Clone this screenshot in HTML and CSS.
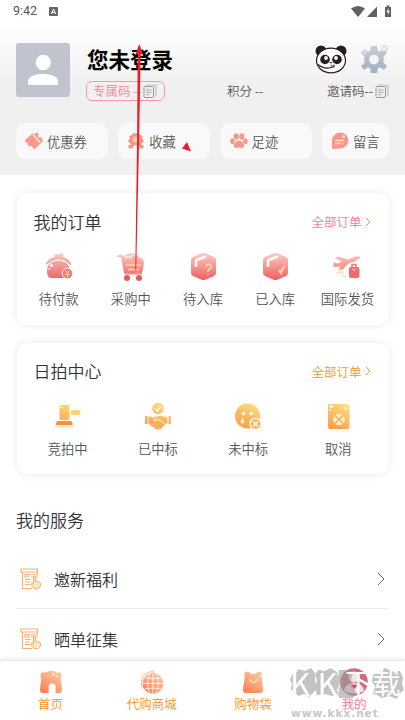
FILE: index.html
```html
<!DOCTYPE html>
<html lang="zh-CN">
<head>
<meta charset="utf-8">
<meta name="viewport" content="width=device-width, initial-scale=1">
<title>我的</title>
<link rel="stylesheet" href="styles.css">
</head>
<body>
<svg class="defs" width="0" height="0" aria-hidden="true">
  <defs>
    <linearGradient id="red" x1="0" y1="0" x2="0" y2="28" gradientUnits="userSpaceOnUse"><stop offset=".05" stop-color="#fdc5bb"/><stop offset="1" stop-color="#ee5a5f"/></linearGradient>
    <linearGradient id="gold" x1="20" y1="0" x2="8" y2="28" gradientUnits="userSpaceOnUse"><stop offset="0" stop-color="#ffdc82"/><stop offset="1" stop-color="#fd9742"/></linearGradient>
    <linearGradient id="peach" x1="22" y1="0" x2="4" y2="26" gradientUnits="userSpaceOnUse"><stop offset="0" stop-color="#fed0a6"/><stop offset="1" stop-color="#fb7a50"/></linearGradient>
    <linearGradient id="steel" x1="0" y1="0" x2="0" y2="30" gradientUnits="userSpaceOnUse"><stop offset="0" stop-color="#cbd0d8"/><stop offset="1" stop-color="#9dadc2"/></linearGradient>
    <symbol id="copy" viewBox="0 0 14 14"><path d="M4 2.500V1h9v10h-1.500" fill="none" stroke="#c4c4c4" stroke-width="1.200"/><rect x="1" y="2.500" width="9.500" height="11" rx="1" fill="none" stroke="#999"/><path d="M3 6h5.500M3 8.300h5.500M3 10.600h3" stroke="#aaa" fill="none"/></symbol>
    <symbol id="service" viewBox="0 0 22 22"><path d="M2.500 4v16.500H12M17 4v5M1 1h16.500v3H1zM5 6.500h4v2.500H5zM11 6.500h4M11 9h2M5 11.500h6M5 14h5M5 16.500h5" fill="none" stroke="#f9b079" stroke-width="1.200"/><path d="M13.500 9c0-1.500 2-1.500 2 0v4.500l4 .7c1.200.4 1.300 1.400 1 3-.3 2-1.400 3.600-3 3.600h-2.300c-1.300 0-4.200-3.500-4.200-4.500s1.300-1 2.500.2z" fill="#fdebc4" stroke="#f9a565"/></symbol>
  </defs>
</svg>
<main class="screen">
  <header class="profile">
    <div class="status">
      <span class="clock">9:42</span>
      <svg class="app-badge" viewBox="0 0 9 9"><rect width="9" height="9" rx="1" fill="#666"/><path d="M2.300 7 4.500 2l2.200 5M3 5.500h3" fill="none" stroke="#fff"/></svg>
      <svg class="signals" viewBox="0 0 41 13"><path d="M0 3.500Q7 -1.500 14 3.500L7 12z M26 1.500V12H16z M34 2h1.500V.500h3V2H40v10h-6z" fill="#616161"/><path d="m37.500 3-2 4h1.300v3l2-4h-1.300z" fill="#fff"/></svg>
    </div>
    <div class="identity">
      <svg class="avatar" viewBox="0 0 54 54"><rect width="54" height="54" rx="3" fill="#bfc4ce"/><circle cx="27.300" cy="19.500" r="7.700" fill="#fff"/><path d="M12 42v-4c0-4.500 7-7 15-7s15 2.500 15 7v4z" fill="#fff"/></svg>
      <div class="details">
        <div class="name-line">
          <h1>您未登录</h1>
          <svg class="panda" viewBox="0 0 32 29"><g fill="#291c20"><circle cx="6" cy="6" r="5.500"/><circle cx="26" cy="6" r="5.500"/></g><ellipse cx="16" cy="15.500" rx="14.500" ry="12.300" fill="#fff" stroke="#291c20" stroke-width="1.200"/><g fill="#291c20"><ellipse cx="10" cy="14.500" rx="4.800" ry="4.700"/><ellipse cx="22" cy="14.500" rx="4.800" ry="4.700"/></g><circle cx="11" cy="13" r="1.900" fill="#fff"/><circle cx="21" cy="13" r="1.900" fill="#fff"/><path d="M14.500 17h3l-1.500 1.700z" fill="#291c20"/><path d="M3 19.500c4 4 10 4 13 3l3-.8v-2" fill="none" stroke="#291c20" stroke-width="1.200"/><circle cx="16.500" cy="20.500" r="1" fill="#e23b3b"/></svg>
          <svg class="gear" viewBox="0 0 28 30"><path d="M22 1h3l.5 2 2 1-1 2-1 2-3 1-3-3z" fill="#e1dcd6"/><g fill="url(#steel)"><circle cx="13" cy="15.500" r="9.800"/><path d="M10 2h6l1 6H9zM10 29h6l1-6H9zM0 9l3-4 6 4-4 5zM26 22l-3 4-6-4 4-5zM0 22l3 4 6-4-4-5zM26 9l-3-4-6 4 4 5z"/></g><circle cx="13" cy="15.500" r="4.800" fill="#f5f5f5"/><circle cx="3.500" cy="8.500" r="2.300" fill="#d5dbe2"/><circle cx="23" cy="5" r="2.200" fill="#f3eee9"/></svg>
        </div>
        <div class="code-line">
          <span class="own-code">专属码 --<svg><use href="#copy"/></svg></span>
          <span class="points">积分 --</span>
          <span class="invite">邀请码--<svg><use href="#copy"/></svg></span>
        </div>
      </div>
    </div>
    <nav class="shortcuts">
      <a><svg viewBox="0 0 18 18"><path d="M0 8 8 1c1 2 3 1 3-.8L14 2l-1 2 2 2 1.500-1L18 9l-8 8-2.500-1c.8-1.500-1-3-2.500-1.500L2.500 13c1-2 0-3-2.500-2.500z" fill="#fc998f"/><path d="m8 2.500 7 8" stroke="#fff3ea" stroke-width="1.300"/></svg>优惠券</a>
      <a><svg viewBox="0 0 18 18"><path d="m9 1.500 2.500-.5L13 3l2.500 1L15.300 7 17 9l-2 2-1 2h3l-1 2 1 1-4 .5L11 13H7l-2 3.500L1 16l1-1-1-2h3l-1-2-2-2 1.700-2-.2-3L5 3l1.500-2z" fill="#fb8f84"/><circle cx="9" cy="7.500" r="4" fill="#fbb09c"/><path d="m9 4.500 1 2 2 .2-1.500 1.500.5 2L9 9.200l-2 1 .5-2L6 6.700l2-.2z" fill="#ffe0b5"/></svg>收藏</a>
      <a><svg viewBox="0 0 18 18"><g fill="#fc968d"><ellipse cx="6.200" cy="4.500" rx="2.600" ry="3.300"/><ellipse cx="11.800" cy="4.500" rx="2.600" ry="3.300"/><ellipse cx="2.500" cy="9.200" rx="2.200" ry="3"/><ellipse cx="15.500" cy="9.200" rx="2.200" ry="3"/><path d="M9 8.500c3 0 5.500 3.500 5.200 5.500-.3 2.500-3 2-5.200 1.500-2.200.5-4.900 1-5.200-1.500C3.500 12 6 8.500 9 8.500z"/></g></svg>足迹</a>
      <a><svg viewBox="0 0 18 18"><path d="M1 17V8.500A8.200 8 0 1 1 9.500 16.500z" fill="#fc968d"/><path d="M4 8.500h9M4 11.500h6M12 11.500h1" stroke="#ffe4c1" stroke-width="1.500"/><circle cx="12.500" cy="4.500" r="1.300" fill="#fff"/></svg>留言</a>
    </nav>
  </header>

  <section class="card orders">
    <div class="card-head"><h2>我的订单</h2><a>全部订单<svg viewBox="0 0 6 10"><path d="m1 1 4 4-4 4"/></svg></a></div>
    <ul>
      <li><svg viewBox="0 0 28 28"><path d="M1 10C4 6 7 4 10 4c-2-3 2-4 3.500-2C15-1 20 1 18 4c3 0 6 3 8 6v3c-5-5-8-6.500-12.500-6.500S5 9 1 12z" fill="url(#red)"/><path d="M6 9.500c4-3 11-3 15 0 2 1.500 3.500 4 3.500 8 0 5-2.500 7.500-5.500 7.500H6c-3 0-4-4-4-7s1-6.500 4-8.500z" fill="url(#red)"/><path d="M1.500 12.500Q13 1.500 25.500 12.500" fill="none" stroke="#fff"/><circle cx="22.500" cy="20.500" r="5.300" fill="#f17b78" stroke="#fff"/><path d="m20.500 17.500 2 2.500 2-2.500M22.500 20v4M20.300 21.500h4.400" fill="none" stroke="#ffe1a8"/><g fill="#fff"><circle cx="6.500" cy="12.500" r="1.500"/><circle cx="4.300" cy="16" r=".9"/></g></svg>待付款</li>
      <li><svg viewBox="0 0 28 28"><path d="m0 4 1-2h5l1 3c0-2 2-4 4-4l6-1 6 5 3 1 1 4-2 10.500H7L4 4z" fill="url(#red)"/><path d="M9 6V3.500h3l2 1.500M13 6l2-3.500 3-.5" fill="none" stroke="#fff"/><path d="M9 12h15M11 16.500h11" stroke="#ffdda6" stroke-width="1.600"/><path d="M8 21h17" stroke="#ee7474"/><circle cx="10" cy="25" r="3" fill="#e8575b"/><circle cx="22" cy="25" r="3" fill="#e8575b"/></svg>采购中</li>
      <li><svg viewBox="0 0 28 28"><path d="M12 .5c2-.7 3-.7 5 0L25 4q2 1 2 3v13q0 2-2 3l-8 3.500q-2.500 1-5 0L4 23q-2-1-2-3V7q0-2 2-3z" fill="url(#red)"/><path d="M7 14V8.500q0-1.500 2-2l8-3" fill="none" stroke="#fff" stroke-width="2.500"/><path d="M17 14c0-4 6-3 5 .5C21.500 16 19 16 19 19M18.500 21.500h1" fill="none" stroke="#ffdda6" stroke-width="1.700"/></svg>待入库</li>
      <li><svg viewBox="0 0 28 28"><path d="M12 .5c2-.7 3-.7 5 0L25 4q2 1 2 3v13q0 2-2 3l-8 3.500q-2.500 1-5 0L4 23q-2-1-2-3V7q0-2 2-3z" fill="url(#red)"/><path d="M7 14V8.500q0-1.500 2-2l8-3" fill="none" stroke="#fff" stroke-width="2.500"/><path d="m18 17 2 3q1-4 3.500-6.500" fill="none" stroke="#ffdda6" stroke-width="2"/></svg>已入库</li>
      <li><svg viewBox="0 0 28 28"><path d="M1 14c-1-1-.5-3 0-5l3 1.500 5-2L2 5l3-1.500 10 3 6-2.500c3-1 5.500-1 6 0s-2 3-5 4.200L15 11l-6 6-4 .5 3-4z" fill="url(#red)"/><path d="M5 17h5M3 20h8M8 23h5" stroke="#ffe2b8" stroke-width="1.600"/><path d="M19 14v-2.500h4V14" fill="none" stroke="#ee7775" stroke-width="1.500"/><rect x="16" y="14" width="10.500" height="11" rx="2" fill="#ec6c6b"/><path d="M19.500 16q1.500 2.500 3 0" fill="none" stroke="#fff"/></svg>国际发货</li>
    </ul>
  </section>

  <section class="card auctions">
    <div class="card-head"><h2>日拍中心</h2><a>全部订单<svg viewBox="0 0 6 10"><path d="m1 1 4 4-4 4"/></svg></a></div>
    <ul>
      <li><svg viewBox="0 0 28 28"><rect x="1" y="22" width="18" height="3" rx="1" fill="#ffedcc"/><rect x="5.500" y="2" width="10" height="15" rx="1.500" fill="url(#gold)"/><path d="M2 22v-1.500Q2 18 4 18h12.500q2 0 2 2.500V22z" fill="#fb8f3d"/><rect x="16.500" y="7" width="10" height="5" rx="2.500" fill="#ffd07a"/><circle cx="7.500" cy="4.500" r="1" fill="#fff"/></svg>竞拍中</li>
      <li><svg viewBox="0 0 28 28"><circle cx="14" cy="5.500" r="5.800" fill="url(#gold)"/><path d="m11 5.500 2.300 2.300L17 3.500" fill="none" stroke="#fff" stroke-width="1.500"/><path d="M1 13h3l5 1.500 4-1.500h5l5 1.500 1-1.500h3v8h-3l-1-1-7 6.500h-4L4 20v1H1z" fill="url(#gold)"/><path d="m14 13-4.500 4c1.500 1.500 3.500.5 5-1l6 5M4 13v8M24 13v8" fill="none" stroke="#fff" stroke-width=".9"/><path d="M8 22.500l2.500-2M10.500 24.500l2.500-2M13.500 26l2-2" fill="none" stroke="#fff" stroke-width=".7"/></svg>已中标</li>
      <li><svg viewBox="0 0 28 28"><circle cx="13.500" cy="13" r="12.500" fill="url(#gold)"/><circle cx="9.500" cy="10.500" r="1.700" fill="#fff"/><circle cx="17.500" cy="10.500" r="1.700" fill="#fff"/><path d="M8.500 14.500c2 2.500 3 6 0 6s-2-3.500 0-6z" fill="#fff2cc"/><circle cx="21.500" cy="21" r="5.600" fill="#fdb15c" stroke="#fff" stroke-width="1.300"/><path d="m19 18.500 5 5M24 18.500l-5 5" stroke="#fff4d4" stroke-width="1.800"/></svg>未中标</li>
      <li><svg viewBox="0 0 28 28"><path d="M4 1h18q3.500 0 3.500 4v19q0 2-2 2H6q-2 0-2-2z" fill="url(#gold)"/><circle cx="15" cy="16.500" r="5.800" fill="#fff1cb"/><path d="m11 12.500 8 8M19 12.500l-8 8" stroke="#fdb159" stroke-width="1.700"/><path d="M19 3.500q5 0 5 3h-4z" fill="#fff0bb"/><circle cx="7.500" cy="3.500" r="1.600" fill="#fff"/><circle cx="6" cy="7" r="1" fill="#fff"/></svg>取消</li>
    </ul>
  </section>

  <section class="services">
    <h2>我的服务</h2>
    <a class="service"><svg class="service-icon"><use href="#service"/></svg><span>邀新福利</span><svg class="arrow" viewBox="0 0 8 14"><path d="m1 1 6 6-6 6"/></svg></a>
    <a class="service"><svg class="service-icon"><use href="#service"/></svg><span>晒单征集</span><svg class="arrow" viewBox="0 0 8 14"><path d="m1 1 6 6-6 6"/></svg></a>
  </section>

  <nav class="tabs">
    <a><svg viewBox="0 0 26 26"><path d="M2.500 9C0 5 3 1 7 3c4-3 9-3 13 0 4-2 6 2 3.500 6L25 21q0 4-4 4h-3v-7q0-3-3.500-3.500h-1Q10.500 15 10.500 18v7H5q-4 0-4-4z" fill="url(#peach)"/><circle cx="15.500" cy="5" r="1.200" fill="#fff"/><circle cx="19" cy="6.500" r=".8" fill="#fff"/></svg>首页</a>
    <a><svg viewBox="0 0 26 26"><circle cx="14" cy="14.500" r="11.300" fill="url(#peach)"/><path d="M3 14.500h22M5 8.500q9 2 18 0M5 20.500q9-2 18 0M14 3v23M11 3Q5 14 11 26M17 3q6 11 0 23" fill="none" stroke="#fff" stroke-width=".9"/><path d="M2.500 20Q-1 9 6 4q3-2 6-2l2-1.500 1 2.500-3 1" fill="none" stroke="#fbb27e"/></svg>代购商城</a>
    <a><svg viewBox="0 0 26 26"><path d="M4 8c-1-4 0-6 3-6q3 0 4 2h5q1-2 4-2c3 0 3 3 2.500 6L24 21q0 4-4 4H6q-4 0-4-4z" fill="url(#peach)"/><path d="M9 10q5 7 9 0" fill="none" stroke="#ffe4b7" stroke-width="1.700"/><circle cx="21" cy="7" r="1" fill="#fff"/></svg>购物袋</a>
    <a class="current"><svg viewBox="0 0 28 28"><circle cx="14" cy="14" r="13.800" fill="#d06c7c"/><circle cx="14" cy="9" r="5.500" fill="#f3e3e3"/><path d="M4 23q1-8 10-8t10 8q-10 5-20 0z" fill="#f3e3e3"/><path d="m14 21-3-3q1-3 3-1 2-2 3 1z" fill="#d94965"/></svg>我的</a>
  </nav>
</main>

<div class="watermark">
  <svg viewBox="0 0 116 34"><path d="M3 8 8 5 9 2l7 2 6-3 4 5v8l2 7-4 5-4 4-5-3-6 2-4-4-3-3 1-5-2-4zM29 3l7 1 5-3 7 4 1 6 2 5-3 7 1 4-6 2-7-2-8 1-2-7 2-8-2-5zM50 3h11l4-1-3 11 5 14-3 4H50l-1-4 2-9-2-8zM84 8l8-4 4-3 10 4 5-1 3 7-1 6 2 6-5 4-2 5-8-3-7 2-5-3-4-1 2-7-3-6z" fill="#9b9b9b" opacity=".6"/></svg>
  <span class="brand"><b>K</b><b>K</b><b>下</b><b>载</b></span>
  <span class="site">www.kkx.net</span>
</div>
<svg class="pointer" viewBox="0 0 60 226"><path d="M6.800 5h3L8 100 5.200 226h-.9L6 100z" fill="#ed1c2a"/><path d="M8.300 0 12 10H4.500z" fill="#ed1c2a"/><path d="m56 98 4 9.500-9-3z" fill="#ed1c2a"/></svg>
</body>
</html>
```
FILE: styles.css
```css
* { box-sizing: border-box; }
body { margin: 0; width: 405px; height: 720px; overflow: hidden; position: relative; background: #fff; color: #444; font-family: "Noto Sans CJK SC", sans-serif; font-weight: 350; }
h1, h2, ul { margin: 0; padding: 0; }
ul { list-style: none; }
svg { display: block; flex: none; }
.defs { position: absolute; }
.screen { height: 720px; display: flex; flex-direction: column; overflow: hidden; }

.profile { height: 175px; flex: none; background: linear-gradient(#fff 25px, #f0f0f0 85px); }
.status { height: 22px; padding: 0 13px 0 13px; display: flex; align-items: center; }
.clock { font: 400 12.5px/22px Roboto, sans-serif; color: #555; }
.app-badge { width: 9px; height: 9px; margin-left: 12px; }
.signals { width: 41px; height: 13px; margin-left: auto; }
.identity { display: flex; gap: 17px; padding: 21px 16px 0; height: 101px; }
.avatar { width: 54px; height: 54px; }
.details { flex: 1; }
.name-line { height: 34px; display: flex; align-items: center; }
.name-line h1 { font-size: 21.5px; line-height: 32px; padding-bottom: 2px; font-weight: 700; color: #000; flex: 1; }
.panda { width: 32px; height: 29px; margin: -2px 14px 0 0; }
.gear { width: 28px; height: 30px; margin-top: -2px; }
.code-line { height: 28px; display: flex; align-items: center; font-size: 12.5px; line-height: 18px; color: #555; }
.code-line svg { width: 14px; height: 14px; }
.own-code { margin-left: -1px; width: 79px; height: 20px; padding-left: 6px; border: 1px solid #fa98aa; border-radius: 6px; display: flex; align-items: center; gap: 1px; color: #f9839c; white-space: nowrap; }
.points { margin-left: 62px; }
.invite { margin-left: auto; display: flex; align-items: center; gap: 2px; }
.shortcuts { display: grid; grid-template-columns: 92px 92px 91px 67px; gap: 10.3px; padding-left: 16px; }
.shortcuts a { height: 36px; padding-left: 9px; border-radius: 9px; background: #f9f9f9; display: flex; align-items: center; gap: 4px; font-size: 13.3px; color: #555; }
.shortcuts svg { width: 18px; height: 18px; }

.card { margin: 18px 16px 0 17px; height: 131.500px; flex: none; border-radius: 10px; background: #fff; box-shadow: 0 0 10px rgba(0,0,0,.09); }
.card-head { height: 57px; padding: 0 18.500px 0 16.500px; display: flex; align-items: center; justify-content: space-between; }
h2 { font-size: 17px; line-height: 24px; font-weight: 350; color: #333; }
.card-head a { display: flex; align-items: center; gap: 3px; font-size: 12.5px; color: #fa7896; }
.card-head svg { width: 6px; height: 10px; }
.card-head path { fill: none; stroke: #f5a02c; }
.auctions .card-head a { color: #f39a25; }
.card ul { display: grid; grid-template-columns: repeat(5, 1fr); padding: 0 5.500px; }
.card.auctions ul { grid-template-columns: repeat(4, 1fr); }
.card li { display: flex; flex-direction: column; align-items: center; gap: 8px; padding-top: 3px; font-size: 13.3px; line-height: 20px; color: #555; white-space: nowrap; }
.card li svg { width: 28px; height: 28px; }

.services { padding: 34px 16px 0; flex: 1; min-height: 0; }
.service { height: 60px; padding: 0 4px; display: flex; align-items: center; font-size: 16px; color: #333; border-bottom: 1px solid #eee; }
.services h2 { margin-bottom: 17px; }
.service-icon { width: 22px; height: 22px; margin-right: 12px; }
.arrow { width: 8px; height: 14px; margin-left: auto; }
.arrow path { fill: none; stroke: #666; }

.tabs { position: relative; height: 59px; flex: none; background: #fff; box-shadow: 0 -1px 5px rgba(0,0,0,.14); display: grid; grid-template-columns: repeat(4, 1fr); padding-top: 8px; }
.tabs a { display: flex; flex-direction: column; align-items: center; font-size: 12.5px; line-height: 18px; color: #f39312; }
.tabs svg { width: 24px; height: 24px; margin: 1px 0; }
.tabs .current { color: #f86f91; }
.tabs .current svg { width: 28px; height: 28px; margin: -1px 0; }

.watermark { position: absolute; left: 289px; top: 667px; width: 116px; height: 53px; pointer-events: none; }
.watermark svg { width: 116px; height: 34px; }
.brand { position: absolute; left: 1px; top: 0; display: flex; color: #fff; font-size: 28px; line-height: 31px; }
.brand b { width: 27.5px; font-weight: 400; }
.brand b:nth-child(-n+2) { font-size: 31px; }
.site { position: absolute; left: 2px; top: 39px; font: 700 10.500px/14px "DejaVu Sans", sans-serif; letter-spacing: 1px; color: #bdbdbd; opacity: .85; }
.pointer { position: absolute; left: 130.500px; top: 44px; width: 60px; height: 226px; pointer-events: none; }
```
